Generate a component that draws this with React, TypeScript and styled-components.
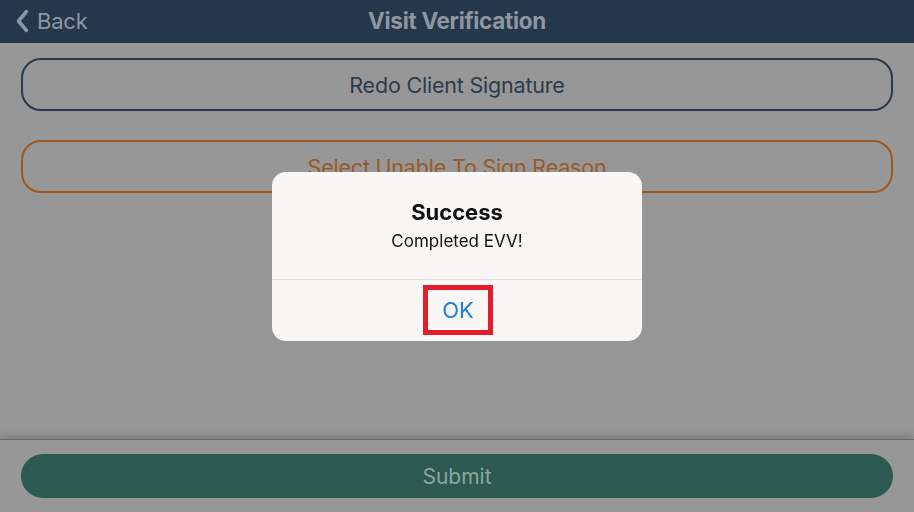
import React from "react";
import styled, { createGlobalStyle } from "styled-components";

const GlobalStyle = createGlobalStyle`
  html, body {
    margin: 0;
    padding: 0;
    background: #979797;
    font-family: "Inter", "Roboto", "Liberation Sans", sans-serif;
  }
  * { box-sizing: border-box; }
`;

const Screen = styled.div`
  height: 100vh;
  display: flex;
  flex-direction: column;
  background: #979797;
`;

const Header = styled.header`
  height: 43px;
  flex-shrink: 0;
  padding-bottom: 2px;
  background: #25374a;
  display: grid;
  grid-template-columns: 1fr auto 1fr;
  align-items: center;
  color: #8e97a1;
`;

const BackLink = styled.div`
  display: flex;
  align-items: center;
  gap: 8px;
  padding-left: 16px;
  font-size: 22px;
  letter-spacing: -0.2px;
`;

const Title = styled.h1`
  margin: 0;
  font-size: 22.5px;
  font-weight: 700;
  letter-spacing: -0.3px;
`;

const Content = styled.main`
  flex: 1;
  display: flex;
  flex-direction: column;
  gap: 29px;
  padding: 15px 21px 0;
`;

const OutlineButton = styled.button<{ $tone: string; $text: string }>`
  height: 53px;
  width: 100%;
  border: 2.5px solid ${(p) => p.$tone};
  border-radius: 20px;
  background: transparent;
  color: ${(p) => p.$text};
  font-family: inherit;
  font-size: 21.5px;
  letter-spacing: -0.2px;
`;

const Footer = styled.footer`
  flex-shrink: 0;
  border-top: 1.5px solid #6b6767;
  box-shadow: 0 -4px 6px rgba(70, 60, 60, 0.25);
  padding: 14px 21px 14px;
`;

const SubmitButton = styled.button`
  width: 100%;
  height: 44px;
  border: none;
  border-radius: 22px;
  background: #2d5a50;
  color: #8aa69e;
  font-family: inherit;
  font-size: 21px;
`;

const Backdrop = styled.div`
  position: fixed;
  inset: 0;
  display: flex;
  align-items: center;
  justify-content: center;
`;

const Dialog = styled.div`
  width: 370px;
  height: 169px;
  background: #f8f7f5;
  border-radius: 14px;
  display: flex;
  flex-direction: column;
  overflow: hidden;
`;

const DialogBody = styled.div`
  flex: 1;
  display: flex;
  flex-direction: column;
  align-items: center;
  padding-top: 27px;
  gap: 6px;
  border-bottom: 1px solid #dedddb;
`;

const DialogTitle = styled.div`
  font-size: 22px;
  font-weight: 700;
  color: #111;
`;

const DialogMessage = styled.div`
  font-size: 17px;
  color: #111;
`;

const DialogActions = styled.div`
  height: 61px;
  display: flex;
  align-items: center;
  justify-content: center;
`;

const OkButton = styled.button`
  width: 70px;
  height: 50px;
  margin-left: 2px;
  border: 5px solid #e51d2a;
  background: transparent;
  color: #1a7ee8;
  font-family: inherit;
  font-size: 22px;
`;

const Chevron = () => (
  <svg width="13" height="24" viewBox="0 0 13 24">
    <path
      d="M10.5 2.5 L2.5 12 L10.5 21.5"
      fill="none"
      stroke="#8e97a1"
      strokeWidth="3.5"
      strokeLinecap="round"
      strokeLinejoin="round"
    />
  </svg>
);

export default function App() {
  return (
    <>
      <GlobalStyle />
      <Screen>
        <Header>
          <BackLink>
            <Chevron />
            Back
          </BackLink>
          <Title>Visit Verification</Title>
          <div />
        </Header>
        <Content>
          <OutlineButton $tone="#2b3a4a" $text="#2d3b4b">
            Redo Client Signature
          </OutlineButton>
          <OutlineButton $tone="#a0571f" $text="#9a5a27">
            Select Unable To Sign Reason
          </OutlineButton>
        </Content>
        <Footer>
          <SubmitButton>Submit</SubmitButton>
        </Footer>
      </Screen>
      <Backdrop>
        <Dialog>
          <DialogBody>
            <DialogTitle>Success</DialogTitle>
            <DialogMessage>Completed EVV!</DialogMessage>
          </DialogBody>
          <DialogActions>
            <OkButton>OK</OkButton>
          </DialogActions>
        </Dialog>
      </Backdrop>
    </>
  );
}
